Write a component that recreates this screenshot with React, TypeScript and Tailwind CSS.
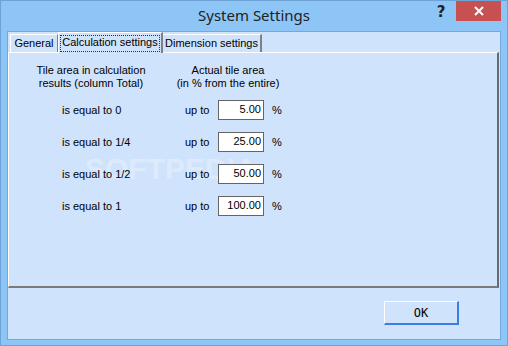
const rows = [
  { label: 'is equal to 0', value: '5.00' },
  { label: 'is equal to 1/4', value: '25.00' },
  { label: 'is equal to 1/2', value: '50.00' },
  { label: 'is equal to 1', value: '100.00' },
];

function TitleBar() {
  return (
    <div className="relative flex h-[30px] items-start">
      <div className="flex-1 pt-[4px] text-center text-[15px] leading-[20px] text-[#222] [font-family:'Noto_Sans',sans-serif]">
        System Settings
      </div>
      <div className="absolute left-[434px] top-[2px] flex h-[19px] w-[12px] items-center justify-center text-[15px] font-bold text-[#222] [font-family:'DejaVu_Sans',sans-serif]">
        ?
      </div>
      <div className="absolute left-[455px] top-0 flex h-[20px] w-[45px] items-center justify-center bg-[#c75050]">
        <svg width="10" height="10" viewBox="0 0 10 10">
          <path d="M1 1 L9 9 M9 1 L1 9" stroke="#fff" strokeWidth="2" />
        </svg>
      </div>
    </div>
  );
}

function Tabs() {
  return (
    <div className="flex h-[20px] items-end pl-[2px]">
      <div className="flex h-[18px] w-[48px] items-center justify-center border-l border-t border-r border-l-white border-t-white border-r-[#808080] pb-[1px]">
        General
      </div>
      <div className="relative z-10 -mb-[1px] flex h-[21px] w-[105px] items-center justify-center border-l border-t border-r-2 border-l-white border-t-white border-r-[#808080] bg-[#d0e3fc] px-[1px]">
        <span className="flex h-[17px] w-full items-center justify-center border border-dotted border-[#333] pb-[1px]">
          Calculation settings
        </span>
      </div>
      <div className="flex h-[18px] w-[99px] items-center justify-center border-t border-r-2 border-t-white border-r-[#808080] pb-[1px]">
        Dimension settings
      </div>
    </div>
  );
}

function Panel() {
  return (
    <div className="relative h-[236px] w-[491px] border-l border-t border-r-2 border-b-2 border-l-white border-t-white border-r-[#6b6b6b] border-b-[#7a7a7a] pt-[11px]">
      <div className="pointer-events-none absolute left-[76px] top-[98px] text-[30px] font-bold leading-[36px] text-white/30 [font-family:'Liberation_Sans',sans-serif]">
        SOFTPEDIA
      </div>
      <div className="relative flex text-center leading-[13px]">
        <div className="w-[164px]">
          Tile area in calculation
          <br />
          results (column Total)
        </div>
        <div className="w-[110px]">
          Actual tile area
          <br />
          (in % from the entire)
        </div>
      </div>
      <div className="relative mt-[10px] flex flex-col gap-[12px]">
        {rows.map((r) => (
          <div key={r.label} className="flex h-[20px] items-center">
            <div className="ml-[53px] w-[123px]">{r.label}</div>
            <div className="w-[33px]">up to</div>
            <div className="flex h-[20px] w-[46px] items-start justify-end border border-[#646464] bg-white pr-[2px] pt-[1px] leading-[14px]">
              {r.value}
            </div>
            <div className="ml-[8px]">%</div>
          </div>
        ))}
      </div>
    </div>
  );
}

export default function App() {
  return (
    <div className="h-[346px] w-[508px] border border-[#6fa3d6] bg-[#8cc5f6] text-[11px] text-black [font-family:'Liberation_Sans',Arial,sans-serif]">
      <TitleBar />
      <div className="ml-[6px] h-[309px] w-[494px] border border-[#72a9dc] bg-[#d0e3fc]">
        <Tabs />
        <Panel />
        <div className="flex justify-end pr-[41px] pt-[13px]">
          <button className="h-[24px] w-[75px] border-l border-t border-r-2 border-b-2 border-l-white border-t-white border-r-[#3d7fe0] border-b-[#3d7fe0] bg-[#d0e3fc] text-[12px] [font-family:'DejaVu_Sans_Mono',monospace]">
            OK
          </button>
        </div>
      </div>
    </div>
  );
}
